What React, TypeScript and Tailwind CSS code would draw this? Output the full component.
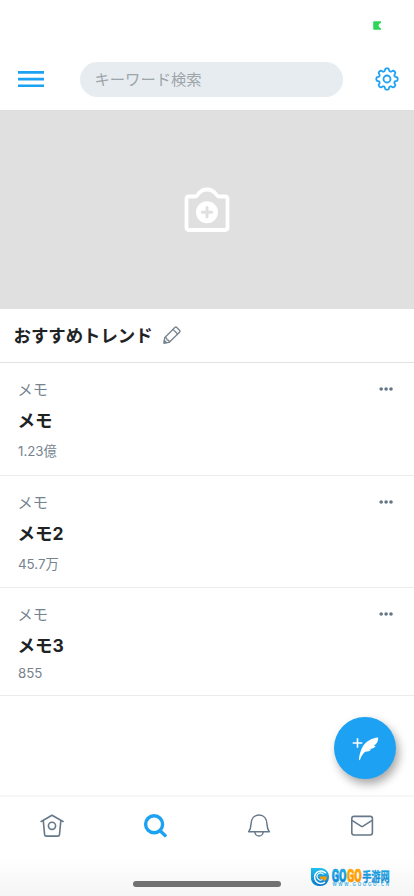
import type { ReactNode } from 'react';

type Trend = {
  title: string;
  count: string;
  height: string;
  countGap: string;
};

const trends: Trend[] = [
  { title: 'メモ', count: '1.23億', height: 'h-[112.5px]', countGap: 'mt-[8px]' },
  { title: 'メモ2', count: '45.7万', height: 'h-[112.5px]', countGap: 'mt-[8px]' },
  { title: 'メモ3', count: '855', height: 'h-[108px]', countGap: 'mt-[5px]' },
];

// Eight rounded teeth around a circle
const gearPath = () => {
  const points: string[] = [];
  for (let i = 0; i < 160; i++) {
    const a = (i / 160) * Math.PI * 2;
    const wave = Math.tanh(1.8 * Math.cos(8 * a) + 0.3);
    const r = 9.35 + 1.35 * wave;
    points.push(`${(12 + r * Math.sin(a)).toFixed(2)} ${(12 - r * Math.cos(a)).toFixed(2)}`);
  }
  return `M${points.join('L')}Z`;
};

const MenuIcon = () => (
  <svg width="26" height="18" viewBox="0 0 26 18" stroke="#1da1f2" strokeWidth="2.6">
    <path d="M0 2.4h26M0 9.100h26M0 15.700h26" />
  </svg>
);

const GearIcon = () => (
  <svg width="24" height="24" viewBox="0 0 24 24" fill="none" stroke="#1da1f2" strokeWidth="1.8" strokeLinejoin="round">
    <path d={gearPath()} />
    <circle cx="12" cy="12" r="3.5" />
  </svg>
);

const CameraIcon = () => (
  <svg width="46" height="46" viewBox="0 0 46 46" fill="none">
    <path
      d="M5 9.5h5.8c1.6 0 2.3-.9 3.2-2.2C16 4.300 19 2.500 23 2.500s7 1.800 9 4.800c.9 1.300 1.600 2.200 3.200 2.200H41c1.500 0 2.500 1 2.500 2.500v28.500c0 1.500-1 2.500-2.500 2.500H5c-1.500 0-2.500-1-2.500-2.500V12C2.500 10.500 3.500 9.500 5 9.500Z"
      stroke="white"
      strokeWidth="3.8"
    />
    <circle cx="23" cy="25.200" r="11" fill="white" />
    <path d="M23 20.400v9.600M18.200 25.200h9.600" stroke="#e0e0e0" strokeWidth="2.900" strokeLinecap="round" />
  </svg>
);

const PencilIcon = () => (
  <svg width="18" height="18" viewBox="0 0 18 18" fill="none" stroke="#75838f" strokeWidth="1.300" strokeLinejoin="round">
    <path d="M1 17l.7-5.300L11.800 1.500q1-1 2 0l2.700 2.700q1 1 0 2L6.300 16.300Z" />
    <path d="M1.700 11.700q2.200-.4 2.300 2.200 2.300 0 2.300 2.400M10 3.400l4.600 4.600" />
    <path d="M1 17l.3-2.500 2.200 2.200Z" fill="#75838f" />
  </svg>
);

const HomeIcon = () => (
  <svg width="24" height="24" viewBox="0 0 24 24" fill="none" stroke="#66788a" strokeWidth="1.600" strokeLinecap="round" strokeLinejoin="round">
    <path d="M1.200 7.500L12 1.300l11 6.200" />
    <path d="M3.300 7l1.300 13.600c.1.900.8 1.500 1.700 1.500h11.500c.9 0 1.600-.6 1.700-1.500L20.800 7" />
    <circle cx="12" cy="11.800" r="3.600" />
  </svg>
);

const SearchIcon = () => (
  <svg width="24" height="24" viewBox="0 0 24 24" fill="none" stroke="#1da1f2" strokeLinecap="round">
    <circle cx="11.100" cy="10.200" r="8.500" strokeWidth="3.400" />
    <path d="M17.400 17l4.700 4.400" strokeWidth="3.400" />
  </svg>
);

const BellIcon = () => (
  <svg width="24" height="24" viewBox="0 0 24 24" fill="none" stroke="#66788a" strokeWidth="1.500" strokeLinejoin="round">
    <path d="M1.700 17.700c1.800-2.200 2.200-4.300 2.300-7.400C4.200 4.700 7.200 1.100 12 1.100s7.800 3.600 8 9.200c.1 3.100.5 5.200 2.300 7.400Z" />
    <path d="M7.900 17.900a4.100 4.100 0 0 0 8.200 0" />
  </svg>
);

const MailIcon = () => (
  <svg width="24" height="24" viewBox="0 0 24 24" fill="none" stroke="#66788a" strokeWidth="1.600" strokeLinejoin="round">
    <rect x="1.800" y="2.400" width="20.600" height="18.600" rx="2.200" />
    <path d="M2 6.300l9 5.800c.7.500 1.400.5 2.100 0l9-5.800" />
  </svg>
);

const FeatherIcon = () => (
  <svg width="28" height="26" viewBox="0 0 28 26">
    <path d="M6.500 3.200v9.600M1.700 8h9.600" stroke="white" strokeWidth="1.600" />
    <path
      d="M27.200 2.500C20.500 3 14.500 6.600 11.600 11.800 9.500 15.600 8.400 20 7.900 24.300c0 1.200.8 1.100 1.200.2 1.300-3.500 2.900-5.900 5-7.700 2.400.1 4.700-.5 6.200-2.200l-2.300-.4c3.300-.3 5.600-1.400 6.700-3.200l-2-.3c3-1.500 4.700-4.200 4.500-8.200Z"
      fill="white"
    />
  </svg>
);

const TabItem = ({ children, label }: { children: ReactNode; label: string }) => (
  <button aria-label={label} className="flex flex-1 justify-center">
    {children}
  </button>
);

const Watermark = () => (
  <svg width="80" height="20" viewBox="0 0 80 20" className="absolute right-[23px] bottom-[8px] overflow-visible">
    <defs>
      <linearGradient id="blue" x1="0" y1="0" x2="0" y2="1">
        <stop offset="0" stopColor="#1fc0ef" />
        <stop offset="1" stopColor="#0878cc" />
      </linearGradient>
      <linearGradient id="orange" x1="0" y1="0" x2="0" y2="1">
        <stop offset="0" stopColor="#ffb300" />
        <stop offset="1" stopColor="#ff8a00" />
      </linearGradient>
    </defs>
    <path d="M0 0h9.500c5 0 8.500 4 8.500 9s-3.500 9-8.500 9H8c-5 0-8-4-8-8Z" fill="url(#blue)" />
    <path d="M14.800 5.300A6.300 6.300 0 1 0 14 14" fill="none" stroke="white" strokeWidth="1.500" />
    <path d="M12.500 6.500a3.500 3.500 0 1 0-1 5" fill="none" stroke="white" strokeWidth="1.100" />
    <path d="M8.500 8.600h7.500c0 2.400-1.200 4-3.200 4.500l-.8-2.400H9Z" fill="#ff9800" />
    <g className="font-['Roboto',sans-serif] text-[17.500px] font-black">
      <text x="20.700" y="13.800" textLength="14.700" lengthAdjust="spacingAndGlyphs" fill="url(#blue)" stroke="#0d96dc" strokeWidth=".7">GO</text>
      <text x="36" y="13.800" textLength="14.700" lengthAdjust="spacingAndGlyphs" fill="url(#orange)" stroke="#ff9d00" strokeWidth=".7">GO</text>
    </g>
    <text x="51.200" y="12.700" textLength="27.500" lengthAdjust="spacingAndGlyphs" fill="url(#blue)" stroke="#0d8fd8" strokeWidth=".3" className="font-['Noto_Sans_CJK_SC',sans-serif] text-[13px] font-bold">手游网</text>
    <text x="21.500" y="18.200" textLength="56.500" fill="#44b2e5" className="font-['Liberation_Sans',sans-serif] text-[4.500px] font-bold">WWW.GOGGO.CN</text>
  </svg>
);

export default function App() {
  return (
    <div className="relative flex h-[896px] w-[414px] flex-col overflow-hidden bg-white font-['Inter','Noto_Sans_CJK_JP',sans-serif]">
      {/* Status bar */}
      <div className="flex h-[48px] shrink-0 justify-end pt-[21px] pr-[33px]">
        <svg width="8" height="9" viewBox="0 0 8 9">
          <path d="M1 .3h7v1.500Q5.500 3 5.500 4.500T8 7.500v1.200H1Q.2 8.700.2 8V1Q.2.3 1 .3Z" fill="#2bd65b" />
        </svg>
      </div>

      {/* Header */}
      <header className="flex h-[63px] shrink-0 items-center border-b border-[#dedede] pl-[18px] pr-[15px]">
        <button aria-label="menu">
          <MenuIcon />
        </button>
        <div className="ml-[36px] flex h-[35px] w-[263px] items-center rounded-full bg-[#e6ecf0] pt-[2px] pl-[14.500px] text-[15.300px] text-[#9da5a9]">
          キーワード検索
        </div>
        <div className="ml-auto">
          <GearIcon />
        </div>
      </header>

      {/* Cover photo */}
      <div className="flex h-[198px] shrink-0 items-center justify-center bg-[#e0e0e0]">
        <CameraIcon />
      </div>

      {/* Trends */}
      <div className="flex h-[54px] shrink-0 items-center gap-[10.500px] border-b border-[#dfe2e4] pl-[13.500px]">
        <h1 className="pt-[2px] text-[17.400px] font-bold text-[#202224]">おすすめトレンド</h1>
        <div className="pb-[2px]">
          <PencilIcon />
        </div>
      </div>
      <ul className="shrink-0">
        {trends.map((trend) => (
          <li key={trend.title} className={`flex justify-between border-b border-[#e9ebed] pt-[16px] pr-[21px] pl-[18px] ${trend.height}`}>
            <div className="flex flex-col">
              <span className="-ml-[.5px] text-[15.200px] leading-[22px] text-[#75838f]">メモ</span>
              <span className="-ml-[.5px] mt-[7px] text-[17.500px] leading-[26px] font-bold text-[#202224]">{trend.title}</span>
              <span className={`text-[13.300px] leading-[18px] text-[#75838f] ${trend.countGap}`}>{trend.count}</span>
            </div>
            <svg width="14" height="4" viewBox="0 0 14 4" className="mt-[8px] fill-[#657786]">
              <circle cx="2.200" cy="2" r="1.800" />
              <circle cx="7.100" cy="2" r="1.800" />
              <circle cx="12" cy="2" r="1.800" />
            </svg>
          </li>
        ))}
      </ul>

      {/* Tab bar */}
      <nav className="mt-auto flex h-[101px] shrink-0 items-start border-t-2 border-[#f7f7f7] bg-linear-to-b from-white from-60% to-[#f5f5f5] pt-[17px]">
        <TabItem label="home"><HomeIcon /></TabItem>
        <TabItem label="search"><SearchIcon /></TabItem>
        <TabItem label="notifications"><BellIcon /></TabItem>
        <TabItem label="messages"><MailIcon /></TabItem>
      </nav>

      {/* Compose button */}
      <button aria-label="compose" className="absolute right-[18px] bottom-[117px] flex size-[62px] items-center justify-center rounded-full bg-[#1da1f2] shadow-[3px_5px_10px_rgba(0,0,0,0.35)]">
        <FeatherIcon />
      </button>

      {/* Home indicator */}
      <div className="absolute bottom-[9px] left-[133px] h-[6px] w-[148px] rounded-full bg-[#717171]" />
      <Watermark />
    </div>
  );
}
